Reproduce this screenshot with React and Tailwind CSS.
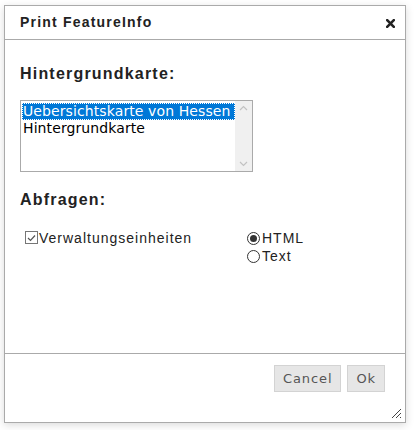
import React, { useState } from 'react';

const OPTIONS = ['Uebersichtskarte von Hessen', 'Hintergrundkarte'];

export default function App() {
  const [selected, setSelected] = useState(OPTIONS[0]);
  const [checked, setChecked] = useState(true);
  const [format, setFormat] = useState('HTML');

  return (
    <div className="w-[415px] h-[430px] bg-white pt-[5px] pl-[4px] font-['Liberation_Sans',Arial,sans-serif] text-[#222]">
      <div className="relative w-[402px] h-[418px] border border-[#aaa] bg-white flex flex-col shadow-[0_2px_8px_rgba(0,0,0,0.15)]">

        {/* Header */}
        <div className="h-[34px] shrink-0 border-b border-[#aaa] flex items-center justify-between pl-[15px] pr-[10px]">
          <span className="text-[14px] font-bold tracking-[1.2px] text-[#222]">Print FeatureInfo</span>
          <svg width="9" height="9" viewBox="0 0 9 9" className="mt-[1px]">
            <path d="M1.2 1.2 L7.8 7.8 M7.8 1.2 L1.2 7.8" stroke="#222" strokeWidth="2.6" strokeLinecap="square" />
          </svg>
        </div>

        {/* Body */}
        <div className="flex-1 pl-[15px] pt-[24px]">
          <h3 className="text-[16px] font-bold tracking-[1.2px] leading-[19px] text-[#222]">Hintergrundkarte:</h3>

          <div className="mt-[17px] w-[233px] h-[72px] border border-[#aaa] bg-white flex">
            <div className="flex-1 pt-[2px] pl-[1px] font-['DejaVu_Sans',Verdana,sans-serif] text-[14px] leading-[17px] tracking-[0.1px]">
              {OPTIONS.map(o => (
                <div
                  key={o}
                  onClick={() => setSelected(o)}
                  className={o === selected
                    ? 'bg-[#0078d7] text-white px-[1px] outline-1 outline-dotted outline-[#fff] -outline-offset-1 whitespace-nowrap overflow-hidden'
                    : 'text-black px-[1px] whitespace-nowrap overflow-hidden'}
                >
                  {o}
                </div>
              ))}
            </div>
            <div className="w-[17px] bg-[#f0f0f0] flex flex-col items-center justify-between py-[4px]">
              <svg width="9" height="6" viewBox="0 0 9 6"><path d="M1 5 L4.5 1.5 L8 5" fill="none" stroke="#c2c2c2" strokeWidth="1.2" /></svg>
              <svg width="9" height="6" viewBox="0 0 9 6"><path d="M1 1 L4.5 4.5 L8 1" fill="none" stroke="#c2c2c2" strokeWidth="1.2" /></svg>
            </div>
          </div>

          <h3 className="mt-[18px] text-[16px] font-bold tracking-[1.2px] leading-[19px] text-[#222]">Abfragen:</h3>

          <div className="mt-[20px] flex">
            <label className="w-[227px] flex items-start gap-[1px] pl-[5px] text-[14px] tracking-[1px] leading-[18px] text-[#222] cursor-pointer">
              <span
                onClick={() => setChecked(!checked)}
                className="mt-[2px] w-[13px] h-[13px] border border-[#767676] bg-white flex items-center justify-center"
              >
                {checked && (
                  <svg width="9" height="8" viewBox="0 0 9 8"><path d="M1 4 L3.5 6.5 L8 1.5" fill="none" stroke="#555" strokeWidth="1.2" /></svg>
                )}
              </span>
              <span>Verwaltungseinheiten</span>
            </label>

            <div className="flex flex-col">
              {['HTML', 'Text'].map(f => (
                <label key={f} onClick={() => setFormat(f)} className="flex items-center gap-[2px] text-[14px] tracking-[1px] leading-[18px] text-[#222] cursor-pointer">
                  <span className="w-[13px] h-[13px] rounded-full border border-[#333] bg-white flex items-center justify-center">
                    {format === f && <span className="w-[7px] h-[7px] rounded-full bg-[#333]" />}
                  </span>
                  <span>{f}</span>
                </label>
              ))}
            </div>
          </div>
        </div>

        {/* Footer */}
        <div className="h-[69px] shrink-0 border-t border-[#aaa] flex justify-end items-start gap-[6px] pt-[11px] pr-[20px] font-['DejaVu_Sans',Verdana,sans-serif]">
          <button className="h-[27px] px-[8px] bg-[#e6e6e6] border border-[#d3d3d3] text-[13px] tracking-[0.9px] text-[#555]">Cancel</button>
          <button className="h-[27px] px-[8px] bg-[#e6e6e6] border border-[#d3d3d3] text-[13px] tracking-[0.9px] text-[#555]">Ok</button>
        </div>

        {/* Resize handle */}
        <svg width="12" height="12" viewBox="0 0 12 12" className="absolute right-[3px] bottom-[3px]">
          <path d="M11 2 L2 11 M11 6 L6 11 M11 10 L10 11" stroke="#444" strokeWidth="1" />
        </svg>
      </div>
    </div>
  );
}
